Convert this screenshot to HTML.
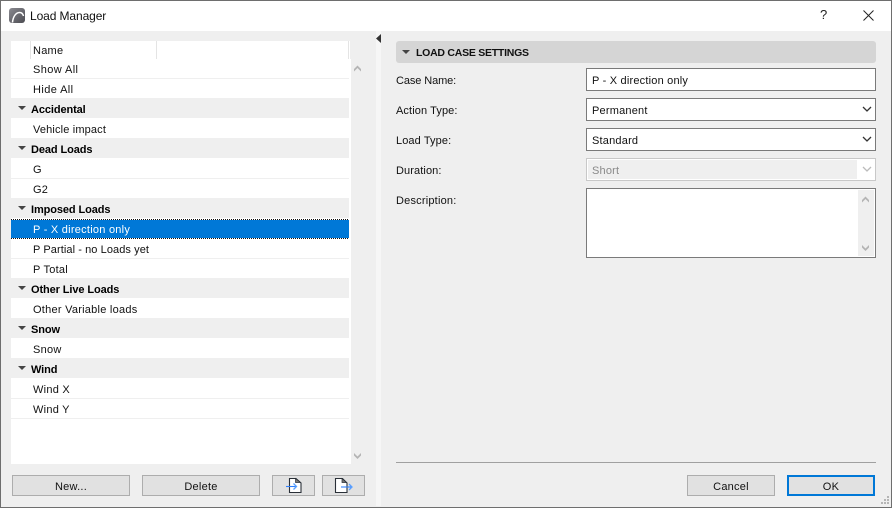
<!DOCTYPE html>
<html><head><meta charset="utf-8"><style>
*{box-sizing:border-box}
html,body{margin:0;padding:0}
body{width:892px;height:508px;position:relative;overflow:hidden;background:#efefef;font:11px "Liberation Sans",sans-serif;color:#111;letter-spacing:.25px}
.a{position:absolute}
.t{position:absolute;white-space:nowrap;line-height:14px}
.row{position:absolute;left:11px;width:338px;height:20px;background:#fff;border-bottom:1px solid #efefef;line-height:23px;padding-left:22px;white-space:nowrap}
.g{background:#efefef;font-weight:bold;padding-left:20px;border-bottom:0;height:20px;line-height:25px;letter-spacing:-.1px;color:#000}
.g:before{content:"";position:absolute;left:7px;top:8px;border-left:4px solid transparent;border-right:4px solid transparent;border-top:4px solid #444}
.sel{background-color:#0078d7;color:#fff;border-bottom:0;height:20px;top:219px;line-height:23px;background-image:repeating-linear-gradient(90deg,#111 0 1px,#fff 1px 2px),repeating-linear-gradient(90deg,#111 0 1px,#fff 1px 2px);background-size:100% 1px,100% 1px;background-repeat:no-repeat,no-repeat;background-position:0 100%,0 0}
.btn{position:absolute;top:475px;height:21px;background:#e1e1e1;border:1px solid #adadad;text-align:center;line-height:22px}
.box{position:absolute;left:586px;width:290px;height:23px;background:#fff;border:1px solid #7a7a7a;line-height:24px;padding-left:5px;letter-spacing:.2px}
.lbl{position:absolute;left:396px;line-height:14px;letter-spacing:.1px}
svg{position:absolute;overflow:visible}
</style></head><body>
<div class="a" style="left:0;top:0;width:892px;height:31px;background:#fff"></div>
<svg style="left:9px;top:8px" width="17" height="16" viewBox="0 0 17 16"><defs><linearGradient id="lg" x1="0" y1="0" x2="1" y2="1"><stop offset="0" stop-color="#8a8a90"/><stop offset="1" stop-color="#4c4c52"/></linearGradient></defs><rect x="0" y="0" width="16" height="15" rx="3" fill="url(#lg)"/><path d="M3.500 14.500C4 8.500 7 4.500 10.500 4.500 12.500 4.500 14 6 14.500 8" fill="none" stroke="#fff" stroke-width="1.500"/></svg>
<div class="t" style="left:30px;top:9px;font-size:12px;letter-spacing:-.1px">Load Manager</div>
<div class="t" style="left:820px;top:8px;font-size:13px;color:#222">?</div>
<svg style="left:863px;top:10px" width="11" height="11" viewBox="0 0 11 11"><path d="M.5 .5L10.500 10.500M10.500 .5L.5 10.500" stroke="#222" stroke-width="1" fill="none"/></svg>

<div class="a" style="left:11px;top:41px;width:339px;height:423px;background:#fff"></div>
<div class="a" style="left:350px;top:59px;width:1px;height:405px;background:#fff"></div>
<div class="a" style="left:30px;top:41px;width:1px;height:18px;background:#e4e4e4"></div>
<div class="a" style="left:156px;top:41px;width:1px;height:18px;background:#e4e4e4"></div>
<div class="a" style="left:348px;top:41px;width:1px;height:18px;background:#e4e4e4"></div>
<div class="t" style="left:33px;top:44px">Name</div>

<div class="row" style="top:59px;letter-spacing:.4px">Show All</div>
<div class="row" style="top:79px;letter-spacing:.4px">Hide All</div>
<div class="row g" style="top:98px">Accidental</div>
<div class="row" style="top:119px;letter-spacing:.15px">Vehicle impact</div>
<div class="row g" style="top:138px">Dead Loads</div>
<div class="row" style="top:159px">G</div>
<div class="row" style="top:179px">G2</div>
<div class="row g" style="top:198px">Imposed Loads</div>
<div class="row sel">P - X direction only</div>
<div class="row" style="top:239px;letter-spacing:.08px">P Partial - no Loads yet</div>
<div class="row" style="top:259px">P Total</div>
<div class="row g" style="top:278px">Other Live Loads</div>
<div class="row" style="top:299px">Other Variable loads</div>
<div class="row g" style="top:318px">Snow</div>
<div class="row" style="top:339px">Snow</div>
<div class="row g" style="top:358px">Wind</div>
<div class="row" style="top:379px">Wind X</div>
<div class="row" style="top:399px">Wind Y</div>

<svg style="left:354px;top:65px" width="8" height="7"><path d="M0 4L3.500 .5 7 4V6.500L3.500 3 0 6.500Z" fill="#b4b4b4"/></svg>
<svg style="left:354px;top:453px" width="8" height="7"><path d="M0 0L3.500 3.500 7 0V2.500L3.500 6 0 2.500Z" fill="#b4b4b4"/></svg>

<div class="a" style="left:376px;top:31px;width:5px;height:475px;background:#f6f6f6"></div>
<svg style="left:376px;top:34px" width="5" height="9"><path d="M5 0V9L0 4.500Z" fill="#333"/></svg>

<div class="btn" style="left:12px;width:118px">New...</div>
<div class="btn" style="left:142px;width:118px">Delete</div>
<div class="btn" style="left:272px;width:43px"></div>
<div class="btn" style="left:322px;width:43px"></div>
<svg style="left:285px;top:477px" width="18" height="17" viewBox="0 0 18 17"><path d="M4.500 1.500H11L16 6V15.500H4.500Z" fill="#fff" stroke="#2a3038" stroke-width="1.100"/><path d="M10.500 1.500V5.500H15.500Z" fill="#777" stroke="#2a3038" stroke-width=".7"/><path d="M1 9.500H11" stroke="#2f80ff" stroke-width="1.100"/><path d="M8.500 6.500L11.500 9.500 8.500 12.500" stroke="#5aa0ff" stroke-width="1.300" fill="none"/></svg>
<svg style="left:335px;top:477px" width="19" height="17" viewBox="0 0 19 17"><path d="M.5 1.500H7.500L12 6V15.500H.5Z" fill="#fff" stroke="#2a3038" stroke-width="1.100"/><path d="M7 1.500V5.500H11.500Z" fill="#777" stroke="#2a3038" stroke-width=".7"/><path d="M6 10H16" stroke="#2f80ff" stroke-width="1.100"/><path d="M14 7L17 10 14 13" stroke="#5aa0ff" stroke-width="1.300" fill="none"/></svg>

<div class="a" style="left:396px;top:41px;width:480px;height:22px;background:#d5d5d5;border-radius:3px"></div>
<svg style="left:402px;top:50px" width="9" height="5"><path d="M0 0H8L4 4Z" fill="#444"/></svg>
<div class="t" style="left:416px;top:46px;font-weight:bold;font-size:10.500px;color:#111;letter-spacing:-.25px">LOAD CASE SETTINGS</div>

<div class="lbl" style="top:74px;letter-spacing:-.1px">Case Name:</div>
<div class="lbl" style="top:104px">Action Type:</div>
<div class="lbl" style="top:134px">Load Type:</div>
<div class="lbl" style="top:164px">Duration:</div>
<div class="lbl" style="top:194px;letter-spacing:.2px">Description:</div>

<div class="box" style="top:68px">P - X direction only</div>
<div class="box" style="top:98px">Permanent</div>
<div class="box" style="top:128px">Standard</div>
<div class="box" style="top:158px;border-color:#c8c8c8;color:#8a8a8a"><div class="a" style="left:1px;top:1px;width:269px;height:19px;background:#efefef"></div><span style="position:relative">Short</span></div>
<div class="box" style="top:188px;height:70px"><div class="a" style="right:1px;top:1px;width:16px;height:66px;background:#efefef"></div></div>
<svg style="left:862px;top:136px" width="10" height="7"><path d="M1 1L5 5 9 1" fill="none" stroke="#333" stroke-width="1.300"/></svg>
<svg style="left:862px;top:106px" width="10" height="7"><path d="M1 1L5 5 9 1" fill="none" stroke="#333" stroke-width="1.300"/></svg>
<svg style="left:862px;top:166px" width="10" height="7"><path d="M1 1L5 5 9 1" fill="none" stroke="#bbb" stroke-width="1.300"/></svg>
<svg style="left:862px;top:196px" width="8" height="7"><path d="M0 4L3.500 .5 7 4V6.500L3.500 3 0 6.500Z" fill="#b4b4b4"/></svg>
<svg style="left:862px;top:245px" width="8" height="7"><path d="M0 0L3.500 3.500 7 0V2.500L3.500 6 0 2.500Z" fill="#b4b4b4"/></svg>

<div class="a" style="left:396px;top:462px;width:480px;height:1px;background:#a0a0a0"></div>
<div class="btn" style="left:687px;width:88px">Cancel</div>
<div class="btn" style="left:787px;width:88px;border:2px solid #0078d7;line-height:20px">OK</div>

<svg style="left:880px;top:495px" width="10" height="10"><g fill="#b5b5b5"><rect x="7" y="1" width="2" height="2"/><rect x="4" y="4" width="2" height="2"/><rect x="7" y="4" width="2" height="2"/><rect x="1" y="7" width="2" height="2"/><rect x="4" y="7" width="2" height="2"/><rect x="7" y="7" width="2" height="2"/></g></svg>

<div class="a" style="left:0;top:0;width:892px;height:508px;border:1px solid #6e6e6e"></div>
</body></html>
